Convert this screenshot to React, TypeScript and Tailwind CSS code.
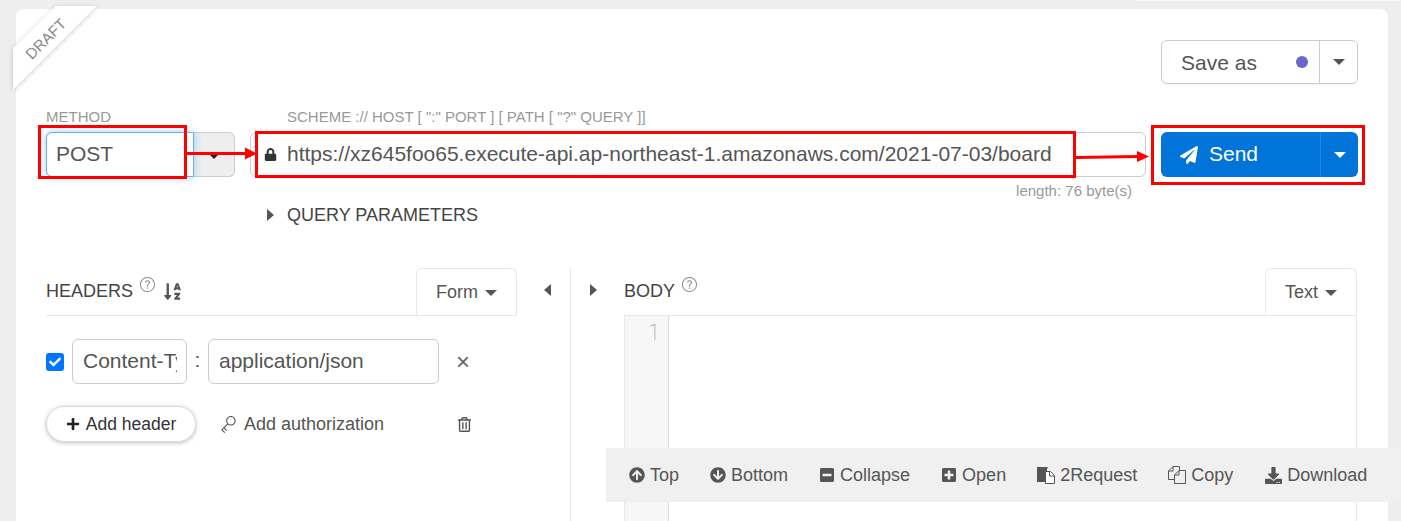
import {
  FaLock,
  FaPaperPlane,
  FaPlus,
  FaCheck,
  FaArrowCircleUp,
  FaArrowCircleDown,
  FaMinusSquare,
  FaPlusSquare,
  FaDownload,
  FaRegTrashAlt,
  FaSortAlphaDown,
} from 'react-icons/fa'
import { SlKey, SlQuestion } from 'react-icons/sl'

function Caret({ className }: { className: string }) {
  return <span className={`inline-block h-0 w-0 border-x-[6px] border-t-[6px] border-x-transparent ${className}`} />
}

function TriangleSide({ dir }: { dir: 'left' | 'right' }) {
  return dir === 'left' ? (
    <span className="inline-block h-0 w-0 border-y-[6px] border-r-[7px] border-y-transparent border-r-[#555]" />
  ) : (
    <span className="inline-block h-0 w-0 border-y-[6px] border-l-[7px] border-y-transparent border-l-[#555]" />
  )
}

function RequestIcon() {
  return (
    <svg width="18" height="18" viewBox="0 0 18 18" className="text-[#555]">
      <path d="M0 1h11l-1 2v13H0z" fill="currentColor" />
      <path d="M8.500 5.500h5l4 4v8h-9z" fill="#fff" stroke="currentColor" strokeWidth="1" />
      <path d="M12.500 5.500v4.500h5" fill="none" stroke="currentColor" strokeWidth="1" />
    </svg>
  )
}

function CopyIcon() {
  return (
    <svg width="18" height="18" viewBox="0 0 18 18" className="text-[#555]">
      <path d="M.5 13.500V5L5 .5h6.500V5M.5 13.500H6M5 .5V5H.5" fill="none" stroke="currentColor" strokeWidth="1" />
      <path d="M6.500 17.500V9L11 4.500h6.500v13zM11 4.500V9H6.500" fill="#f0f0f0" stroke="currentColor" strokeWidth="1" />
    </svg>
  )
}

function ToolItem({ icon, label }: { icon: React.ReactNode; label: string }) {
  return (
    <span className="flex items-center gap-[5px]">
      {icon}
      <span>{label}</span>
    </span>
  )
}

function Annotations() {
  return (
    <>
      <div className="absolute left-[38px] top-[125px] z-20 h-[54px] w-[149px] border-[3px] border-[#f00]" />
      <div className="absolute left-[255px] top-[131px] z-20 h-[47px] w-[821px] border-[3px] border-[#f00]" />
      <div className="absolute left-[1151px] top-[125px] z-20 h-[60px] w-[214px] border-[3px] border-[#f00]" />
      <svg className="absolute left-0 top-0 z-20" width="1401" height="200">
        <path d="M184 153.500H246" stroke="#f00" strokeWidth="3" />
        <path d="M245 147.500L257 153.500L245 159.500Z" fill="#f00" />
        <path d="M1076 157.500L1138 156.500" stroke="#f00" strokeWidth="3" />
        <path d="M1137 151L1149 156.500L1137 162Z" fill="#f00" />
      </svg>
    </>
  )
}

export default function App() {
  return (
    <div className="relative h-[521px] w-[1401px] overflow-hidden bg-[#eeeeee] font-['Liberation_Sans',sans-serif] text-[#555]">
      <div className="absolute left-[1135px] top-0 h-[1px] w-[266px] bg-[#f7f7f7]" />
      <div className="ml-4 mt-[9px] h-[600px] w-[1372px] rounded-lg bg-white px-[30px] pt-[31px]">
        <div className="flex justify-end">
          <div className="flex h-[44px] w-[197px] rounded-md border border-[#ccc] text-[21px] leading-none shadow-[0_1px_1px_rgba(0,0,0,0.05)]">
            <div className="flex flex-1 items-center justify-between pl-[19px] pr-[11px]">
              <span className="mt-[1px]">Save as</span>
              <span className="h-3 w-3 rounded-full bg-[#6a67ce]" />
            </div>
            <div className="flex w-[38px] items-center justify-center border-l border-[#ccc]">
              <Caret className="border-t-[#555]" />
            </div>
          </div>
        </div>

        <div className="mt-[25px] flex gap-[15px]">
          <div className="w-[189px]">
            <div className="h-[23px] text-[15px] leading-4 text-[#999]">METHOD</div>
            <div className="flex h-[45px] text-[21px]">
              <div className="relative z-10 flex w-[148px] items-center rounded-l-md border border-[#66afe9] bg-white pb-[2px] pl-[9px] shadow-[0_0_8px_rgba(102,175,233,0.6)]">
                POST
              </div>
              <div className="flex flex-1 items-center justify-center rounded-r-md border border-l-0 border-[#ccc] bg-[#eee]">
                <span className="mt-[4px] inline-block h-0 w-0 border-x-[5px] border-t-[5px] border-x-transparent border-t-[#222]" />
              </div>
            </div>
          </div>
          <div className="w-[896px]">
            <div className="h-[23px] pl-[37px] text-[15px] leading-4 text-[#999]">
              SCHEME :// HOST [ ":" PORT ] [ PATH [ "?" QUERY ]]
            </div>
            <div className="flex h-[45px] items-center rounded-md border border-[#ccc] pb-[2px] pl-[13px] text-[21px]">
              <FaLock className="mr-[10px] mt-[2px] text-[13px] text-[#333]" />
              <span>https://xz645foo65.execute-api.ap-northeast-1.amazonaws.com/2021-07-03/board</span>
            </div>
            <div className="mt-[6px] pr-[14px] text-right text-[15px] leading-4 text-[#999]">length: 76 byte(s)</div>
          </div>
          <div className="mt-[23px] flex h-[45px] w-[197px] rounded-md bg-[#0074d9] text-[21px] text-white">
            <div className="flex flex-1 items-center pb-[2px] pl-[19px]">
              <FaPaperPlane className="mr-[11px] mt-[2px] text-[18px]" />
              Send
            </div>
            <div className="flex w-[38px] items-center justify-center border-l border-[#2a89dd]">
              <Caret className="border-t-white" />
            </div>
          </div>
        </div>

        <div className="ml-[221px] mt-[6px] flex items-center gap-[13px] text-[18px] leading-5 text-[#444]">
          <TriangleSide dir="right" />
          <span>QUERY PARAMETERS</span>
        </div>

        <div className="mt-[43px] flex">
          <div className="w-[471px]">
            <div className="flex h-[48px] items-center justify-between border-b border-[#e8e8e8]">
              <div className="flex items-center text-[18px] text-[#444]">
                <span>HEADERS</span>
                <SlQuestion className="mb-[14px] ml-[7px] text-[15px] text-[#888]" />
                <FaSortAlphaDown className="ml-[8px] text-[19px] text-[#555]" />
              </div>
              <div className="flex h-[48px] w-[101px] items-center justify-center gap-[7px] rounded-t-md border border-b-0 border-[#e8e8e8] text-[18px]">
                Form
                <Caret className="mt-[2px] border-t-[#555]" />
              </div>
            </div>
            <div className="mt-[23px] flex items-center text-[21px]">
              <span className="flex h-[18px] w-[18px] items-center justify-center rounded-[3px] bg-[#0075ff] text-[12px] text-white">
                <FaCheck />
              </span>
              <div className="ml-2 flex h-[45px] w-[115px] items-center overflow-hidden whitespace-nowrap rounded-md border border-[#ccc] pb-[2px] pl-[10px]">
                <span className="block w-[94px] overflow-hidden">Content-Type</span>
              </div>
              <span className="w-[21px] pb-[3px] text-center">:</span>
              <div className="flex h-[45px] w-[231px] items-center rounded-md border border-[#ccc] pb-[2px] pl-[10px]">
                application/json
              </div>
              <span className="ml-[17px] text-[24px] leading-none text-[#666]">×</span>
            </div>
            <div className="mt-[22px] flex items-center">
              <div className="flex h-[36px] w-[150px] items-center justify-center gap-[6px] rounded-full border border-[#ddd] bg-white text-[17.5px] text-[#333] shadow-[0_1px_4px_rgba(0,0,0,0.25)]">
                <FaPlus className="text-[14px] text-[#222]" />
                Add header
              </div>
              <SlKey className="ml-[24px] text-[17px] text-[#555]" />
              <span className="ml-[7px] text-[18px]">Add authorization</span>
              <FaRegTrashAlt className="ml-[73px] text-[15px] text-[#555]" />
            </div>
          </div>

          <div className="flex w-[53px] items-start justify-end pr-[19px] pt-[16px]">
            <TriangleSide dir="left" />
          </div>

          <div className="flex h-[300px] flex-1 border-l border-[#e8e8e8] pr-px">
            <div className="flex w-[53px] justify-center pr-[8px] pt-[16px]">
              <TriangleSide dir="right" />
            </div>
            <div className="flex-1">
              <div className="flex h-[47px] items-center justify-between">
                <div className="flex items-center text-[18px] text-[#444]">
                  <span>BODY</span>
                  <SlQuestion className="mb-[14px] ml-[7px] text-[15px] text-[#888]" />
                </div>
                <div className="flex h-[47px] w-[92px] items-center justify-center gap-[7px] rounded-t-md border border-b-0 border-[#e8e8e8] text-[18px]">
                  Text
                  <Caret className="mt-[2px] border-t-[#555]" />
                </div>
              </div>
              <div className="flex h-[253px] border border-[#e8e8e8]">
                <div className="w-[44px] border-r border-[#ddd] bg-[#f7f7f7] pr-[8px] pt-[7px] text-right font-['Roboto',sans-serif] text-[22px] font-thin leading-5 text-[#888]">
                  1
                </div>
                <div className="flex-1 bg-white" />
              </div>
            </div>
          </div>
        </div>
      </div>

      <div className="absolute left-[606px] top-[448px] flex h-[54px] w-[795px] items-center gap-[31px] bg-[#f0f0f0] pl-[23px] text-[18px]">
        <ToolItem icon={<FaArrowCircleUp className="text-[16px]" />} label="Top" />
        <ToolItem icon={<FaArrowCircleDown className="text-[16px]" />} label="Bottom" />
        <ToolItem icon={<FaMinusSquare className="text-[16px]" />} label="Collapse" />
        <ToolItem icon={<FaPlusSquare className="text-[16px]" />} label="Open" />
        <ToolItem icon={<RequestIcon />} label="2Request" />
        <ToolItem icon={<CopyIcon />} label="Copy" />
        <ToolItem icon={<FaDownload className="ml-px text-[17px]" />} label="Download" />
      </div>

      <svg className="absolute left-0 top-0 drop-shadow-[0_1px_2px_rgba(0,0,0,0.2)]" width="110" height="100">
        <path d="M13 48L56 6H97L13 90Z" fill="#fff" />
      </svg>
      <span className="absolute left-[21px] top-[31px] -rotate-45 text-[15px] leading-4 text-[#888]">DRAFT</span>

      <Annotations />
    </div>
  )
}
